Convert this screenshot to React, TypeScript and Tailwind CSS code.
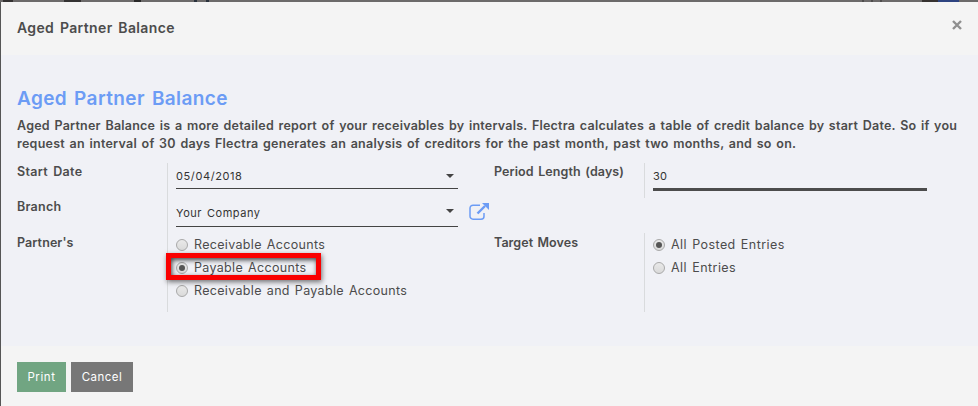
import type { ReactNode } from "react";

function Label({ children, className = "" }: { children: ReactNode; className?: string }) {
  return <div className={`whitespace-nowrap text-[12.5px] font-[560] leading-[18px] text-[#4c4c4c] ${className}`}>{children}</div>;
}

function Radio({ label, checked = false, className = "tracking-[0.32px]" }: { label: string; checked?: boolean; className?: string }) {
  return (
    <label className="flex h-[23px] items-center">
      <span className="mt-px flex size-3 shrink-0 items-center justify-center rounded-full border border-[#a9a9a9] bg-linear-to-b from-[#e9e9e9] to-[#dadada]">
        {checked && <span className="size-[6px] rounded-full bg-[#555]" />}
      </span>
      <span className={`ml-[6px] whitespace-nowrap text-[12.5px] leading-[18px] text-[#4c4c4c] [word-spacing:1.2px] ${className}`}>{label}</span>
    </label>
  );
}

function Caret() {
  return (
    <svg width="8" height="4" viewBox="0 0 8 4" className="mr-1 shrink-0" fill="#444">
      <path d="M0 0h8L4 4z" />
    </svg>
  );
}

export default function App() {
  return (
    <div className="flex h-[406px] w-[978px] flex-col overflow-hidden bg-[#f4f4f4] font-['Inter','Liberation_Sans',sans-serif]">
      <div className="flex h-[2px] shrink-0 bg-[#6c6a6a]">
        <i className="ml-[3px] w-[10px] bg-[#343232]" />
        <i className="ml-[51px] w-[17px] bg-[#343232]" />
        <i className="ml-[53px] w-[7px] bg-[#282828]" />
        <i className="ml-[53px] w-[3px] bg-[#29323c]" />
        <i className="ml-[9px] w-[3px] bg-[#29323c]" />
        <i className="ml-[653px] w-[2px] bg-[#4e4c4c]" />
        <i className="ml-[7px] w-[2px] bg-[#4e4c4c]" />
        <i className="ml-[7px] w-[2px] bg-[#4e4c4c]" />
        <i className="ml-[40px] w-[16px] bg-[#363230]" />
        <i className="w-[21px] bg-[#2d4380]" />
      </div>
      <div className="flex flex-1 flex-col border-l border-[#555]">
        <header className="flex h-[53px] shrink-0 items-center justify-between pl-4 pr-4">
          <h4 className="mb-[2px] text-[14px] font-[560] leading-5 tracking-[0.37px] text-[#4c4c4c] [word-spacing:1.8px]">Aged Partner Balance</h4>
          <svg width="10" height="10" viewBox="0 0 10 10" className="mb-[7px]" stroke="#8f8f8f" strokeWidth="2.4">
            <path d="M1 1l8 8M9 1L1 9" />
          </svg>
        </header>

        <main className="flex h-[291px] shrink-0 flex-col bg-[#f0f1f6] px-4 pt-[32px]">
          <h1 className="h-[30px] text-[19px] font-[560] leading-6 tracking-[0.4px] text-[#6c9cf5] [word-spacing:1.8px]">Aged Partner Balance</h1>
          <div className="whitespace-nowrap text-[12.5px] font-[560] leading-[18px] text-[#4c4c4c] [word-spacing:1.2px]">
            <p className="tracking-[0.235px]">Aged Partner Balance is a more detailed report of your receivables by intervals. Flectra calculates a table of credit balance by start Date. So if you</p>
            <p className="tracking-[0.25px]">request an interval of 30 days Flectra generates an analysis of creditors for the past month, past two months, and so on.</p>
          </div>

          <div className="mt-[10px] flex">
            <section className="flex w-[477px]">
              <div className="flex w-[150px] flex-col">
                <Label className="h-[35px] tracking-[0.35px] [word-spacing:1.5px]">Start Date</Label>
                <Label className="h-[36px] tracking-[0.25px]">Branch</Label>
                <Label className="tracking-[0.1px]">Partner&apos;s</Label>
              </div>
              <div className="h-[149px] flex-1 border-l border-[#d9dbdd] pl-2">
                <div className="flex h-[26px] w-[282px] items-center justify-between border-b border-[#444] text-[11px] text-[#333]">
                  <span className="pt-[2px] tracking-[0.6px]">05/04/2018</span>
                  <Caret />
                </div>
                <div className="flex h-[38px]">
                  <div className="flex w-[282px] justify-between border-b border-[#444] text-[11px] leading-4 text-[#333]">
                    <span className="pt-4 tracking-[0.55px] [word-spacing:1.2px]">Your Company</span>
                    <span className="pt-5"><Caret /></span>
                  </div>
                  <svg width="20" height="17" viewBox="0 0 20 17" className="ml-[11px] mt-[14px]" fill="none" stroke="#6c9cf5" strokeWidth="1.5">
                    <path d="M11 2.2H4A3 3 0 0 0 1 5.2v8a3 3 0 0 0 3 3h8a3 3 0 0 0 3-3V10" />
                    <path d="M8.5 10.5L16 3" strokeWidth="2.4" />
                    <path d="M13 0h7v7z" fill="#6c9cf5" stroke="none" />
                  </svg>
                </div>
                <div className="mt-[6px]">
                  <Radio label="Receivable Accounts" />
                  <div className="relative">
                    <Radio label="Payable Accounts" checked />
                    <div className="absolute -left-[10px] -top-[3px] h-[27px] w-[155px] border-[5px] border-[#fa0000] shadow-[1px_2px_5px_#0008,inset_1px_2px_5px_#000b]" />
                  </div>
                  <Radio label="Receivable and Payable Accounts" />
                </div>
              </div>
            </section>

            <section className="flex flex-1 flex-col">
              <div className="flex h-[70px]">
                <Label className="w-[150px] tracking-[0.1px] [word-spacing:1.2px]">Period Length (days)</Label>
                <div className="h-[35px] border-l border-[#d9dbdd] pl-2">
                  <div className="flex h-[28px] w-[274px] items-center border-b-[3px] border-[#4c4c4c] pt-[2px] text-[11px] tracking-[0.3px] text-[#333]">30</div>
                </div>
              </div>
              <div className="flex">
                <Label className="w-[150px] pt-px tracking-[0.05px] [word-spacing:1.2px]">Target Moves</Label>
                <div className="h-[79px] border-l border-[#d9dbdd] pl-2">
                  <Radio label="All Posted Entries" checked className="tracking-[0.44px]" />
                  <Radio label="All Entries" className="tracking-[0.45px]" />
                </div>
              </div>
            </section>
          </div>
        </main>

        <footer className="flex gap-[5px] pl-4 pt-4 text-[11.5px] text-white">
          <button className="h-[30px] w-[49px] bg-[#71a582] pt-[2px] tracking-[0.6px]">Print</button>
          <button className="h-[30px] w-[62px] bg-[#777] pt-[2px] tracking-[0.5px]">Cancel</button>
        </footer>
      </div>
    </div>
  );
}
